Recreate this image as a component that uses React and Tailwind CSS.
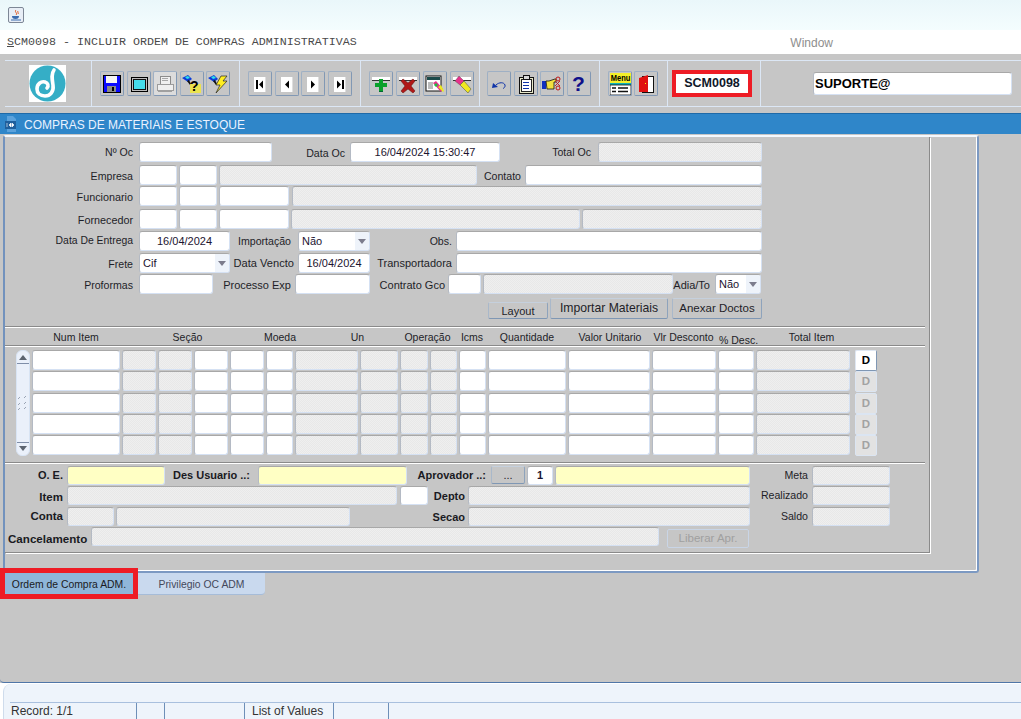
import React from "react";

const fieldBase = "h-full shrink-0 rounded-[3px] border border-t-[#a8a8a8] border-l-[#b4bac4] border-r-[#d5e1f3] border-b-[#d5e1f3]";
const dither = "bg-[repeating-conic-gradient(#e8e8e8_0%_25%,#efefef_0%_50%)] bg-[length:2px_2px]";

function F({ w, kind = "white", children, className = "" }) {
  const bg = kind === "white" ? "bg-white" : kind === "yellow" ? "bg-[#ffffc4]" : dither;
  return (
    <div className={`${fieldBase} ${bg} ${w} ${className} flex items-center overflow-hidden text-[11px] text-[#1c1430]`}>
      {children}
    </div>
  );
}

function L({ w, children, className = "" }) {
  return <div className={`${w} shrink-0 text-right text-[10.600px] leading-[22px] whitespace-nowrap text-[#1e1e28] ${className}`}>{children}</div>;
}

function B({ w, children, className = "" }) {
  return <div className={`${w} shrink-0 text-right text-[11px] font-bold leading-[19px] whitespace-nowrap text-[#1a1a22] ${className}`}>{children}</div>;
}

function Sel({ w, children }) {
  return (
    <div className={`${fieldBase} bg-white ${w} relative flex items-center text-[11px] text-[#1c1430] overflow-hidden`}>
      <span className="pl-[3px]">{children}</span>
      <div className="absolute right-0 top-0 bottom-0 w-[14px] bg-[#eef3fa] flex items-center justify-center">
        <svg width="8" height="5" viewBox="0 0 8 5"><path d="M0 0h8L4 5z" fill="#7c7c8c" /></svg>
      </div>
    </div>
  );
}

function Btn({ w, h = "h-full", className = "", children, off }) {
  return (
    <div className={`${w} ${h} shrink-0 rounded-[2px] border border-t-[#c5d0dd] border-l-[#a9b8ca] border-r-[#8ea3bc] border-b-[#7f97b4] bg-[#c6c6c6] flex items-center justify-center whitespace-nowrap ${off ? "text-[#9d9d9d]" : "text-[#1e1e28]"} ${className}`}>
      {children}
    </div>
  );
}

function Tb({ children, ml = "", light }) {
  return (
    <div className={`w-[24px] h-[25px] shrink-0 rounded-[2px] border border-[#9fb0c4] border-r-[#8198b4] border-b-[#8198b4] flex items-center justify-center ${light ? "bg-[#dcdcdc]" : "bg-[#c6c6c6]"} ${ml}`}>
      {children}
    </div>
  );
}

const Ico = ({ children }) => <svg width="20" height="20" viewBox="0 0 20 20" shapeRendering="crispEdges">{children}</svg>;
const IcoS = ({ children }) => <svg width="20" height="20" viewBox="0 0 20 20">{children}</svg>;

const Save = () => (
  <Ico>
    <rect x="1" y="1" width="17" height="17" fill="#0a0aff" stroke="#000" />
    <rect x="4" y="2" width="11" height="7" fill="#f4f4f4" />
    <rect x="5" y="12" width="9" height="6" fill="#8a8a8a" />
    <rect x="10" y="13" width="2" height="4" fill="#000" />
  </Ico>
);
const Screen = () => (
  <Ico>
    <rect x="2" y="3" width="16" height="14" fill="#bdbdbd" stroke="#000" />
    <rect x="4" y="5" width="12" height="10" fill="#46dcea" stroke="#111" />
  </Ico>
);
const Printer = () => (
  <Ico>
    <rect x="5" y="2" width="10" height="8" fill="#f0f0f0" stroke="#8c8c8c" />
    <rect x="7" y="4" width="6" height="1" fill="#a8a8a8" />
    <rect x="7" y="6" width="6" height="1" fill="#a8a8a8" />
    <rect x="2" y="10" width="16" height="6" fill="#efefef" stroke="#9c9c9c" />
    <rect x="3" y="16" width="14" height="2" fill="#a0a0a0" />
  </Ico>
);
const Funnel = () => (
  <g>
    <path d="M0 4l6-3 4 4-4 3z" fill="#0a3cd8" />
    <path d="M3 3l3-1 2 2-3 1z" fill="#2ee0e8" />
    <path d="M5 7l3 4 1-1-2-4z" fill="#111" />
  </g>
);
const Query = () => (
  <IcoS>
    <Funnel />
    <rect x="8" y="10" width="11" height="9" fill="#f3ea30" opacity="0.8" />
    <text x="8" y="17" fontSize="14" fontWeight="bold" fontFamily="Liberation Sans" fill="#000">?</text>
  </IcoS>
);
const Bolt = () => (
  <IcoS>
    <Funnel />
    <path d="M13 2h6l-4 5h4L8 19l4-8H8z" fill="#ffee22" stroke="#222" strokeWidth="0.7" />
  </IcoS>
);
const Nav = ({ d, bar }) => (
  <Ico>
    <rect x="4" y="3" width="12" height="15" fill="#fff" />
    <rect x="15" y="3" width="1" height="15" fill="#dedede" />
    {bar === "l" && <rect x="6" y="6" width="2" height="9" fill="#000" />}
    {bar === "r" && <rect x="12" y="6" width="2" height="9" fill="#000" />}
    <path d={d} fill="#000" shapeRendering="auto" />
  </Ico>
);
const Bar = () => (
  <>
    <rect x="1" y="3" width="18" height="3" fill="#fff" />
    <rect x="1" y="6" width="18" height="1" fill="#333" />
  </>
);
const Plus = () => (
  <Ico>
    <Bar />
    <rect x="8" y="5" width="4" height="13" fill="#0aa02a" />
    <rect x="4" y="9" width="12" height="4" fill="#0aa02a" />
    <rect x="8" y="17" width="4" height="1" fill="#063" />
  </Ico>
);
const Cross = () => (
  <IcoS>
    <Bar />
    <path d="M3 7l2-2 5 4 5-4 2 2-4 5 4 5-2 2-5-4-5 4-2-2 4-5z" fill="#b01818" stroke="#5c0c0c" strokeWidth="0.5" />
  </IcoS>
);
const WinPen = () => (
  <IcoS>
    <rect x="1" y="2" width="15" height="15" fill="#fff" stroke="#111" />
    <rect x="2" y="3" width="13" height="3" fill="#1c4a4a" />
    <path d="M3 8h5v7H3z" fill="#bbb" />
    <path d="M8 9l3-2 7 8-2 3z" fill="#e8308c" />
    <path d="M13 13l3-2 3 6-1 1z" fill="#eaea20" />
    <path d="M9 11l2-2 2 2-2 2z" fill="#20c040" />
  </IcoS>
);
const Pencil = () => (
  <IcoS>
    <Bar />
    <path d="M3 7l4-5 5 5-4 4z" fill="#e8308c" stroke="#444" strokeWidth="0.4" />
    <path d="M8 11l4-4 7 8-3 4z" fill="#f0e820" stroke="#444" strokeWidth="0.5" />
  </IcoS>
);
const Undo = () => (
  <IcoS>
    <path d="M7 11c3-3 8-3 9 0 .5 2-1 3-2 3.500" fill="none" stroke="#1034a8" strokeWidth="1" />
    <path d="M3 14l1-5 5 4z" fill="#1034a8" />
  </IcoS>
);
const Clip = () => (
  <Ico>
    <rect x="3" y="3" width="14" height="16" fill="#e8e8c8" stroke="#111" />
    <rect x="5" y="5" width="10" height="12" fill="#fff" stroke="#222" />
    <rect x="7" y="1" width="6" height="4" fill="#d8d8d8" stroke="#111" />
    <rect x="7" y="8" width="6" height="1" fill="#1034a8" />
    <rect x="7" y="11" width="6" height="1" fill="#1034a8" />
    <rect x="7" y="14" width="6" height="1" fill="#1034a8" />
  </Ico>
);
const Hand = () => (
  <IcoS>
    <rect x="0" y="7" width="4" height="8" fill="#1030c0" />
    <path d="M4 7h3l6-2h1v3h-2v7H5z" fill="#f2e040" stroke="#111" strokeWidth="0.8" />
    <circle cx="16" cy="5" r="2" fill="none" stroke="#c01818" strokeWidth="1" />
    <circle cx="16" cy="14" r="2" fill="none" stroke="#c01818" strokeWidth="1" />
    <path d="M13 7l5 5M13 12l5-5" stroke="#c01818" strokeWidth="0.9" />
  </IcoS>
);
const Help = () => (
  <span className="text-[21px] font-bold leading-none text-[#10108a] [font-family:'Liberation_Sans',sans-serif]">?</span>
);
const MenuIco = () => (
  <svg width="21" height="22" viewBox="0 0 21 22">
    <rect x="0" y="0" width="21" height="10" fill="#f4f02a" />
    <text transform="scale(1 1.25)" x="0.800" y="6.300" fontSize="7.500" fontWeight="bold" fontFamily="Liberation Sans" fill="#000">Menu</text>
    <rect x="0" y="10" width="21" height="2" fill="#10b0b8" />
    <rect x="0" y="12" width="21" height="10" fill="#fff" stroke="#111" strokeWidth="0.8" />
    <path d="M2 15h4M8 15h10M2 18.500h4M8 18.500h10" stroke="#111" strokeWidth="1.400" />
  </svg>
);
const Door = () => (
  <Ico>
    <rect x="6" y="2" width="11" height="16" fill="#fff" stroke="#111" />
    <path d="M3 4l9-3v17l-9 0z" fill="#e01010" shapeRendering="auto" />
    <rect x="9" y="9" width="1" height="1" fill="#ff0" />
  </Ico>
);
const Logo = () => (
  <div className="w-[37px] h-[37px] bg-white shrink-0">
    <svg width="37" height="37" viewBox="0 0 37 37">
      <circle cx="18.500" cy="18.500" r="18" fill="#35aec6" />
      <path d="M25 5c-3 4-2 9-1 15 1 7-3 11-8 11-5 0-8-3-8-7 0-5 4-8 8-7 3 1 4 4 2 6" fill="none" stroke="#fff" strokeWidth="3.600" strokeLinecap="round" />
    </svg>
  </div>
);

const Sep = () => <div className="w-[1px] h-full bg-[#dce7f5] shrink-0" />;

const cols = [
  ["w-[88px]", "white"], ["w-[34px]", "gray"], ["w-[34px]", "gray"], ["w-[34px]", "white"], ["w-[34px]", "white"], ["w-[27px]", "white"],
  ["w-[63px]", "gray"], ["w-[38px]", "gray"], ["w-[28px]", "gray"], ["w-[27px]", "gray"], ["w-[27px]", "white"], ["w-[78px]", "white"],
  ["w-[82px]", "white"], ["w-[64px]", "white"], ["w-[36px]", "white"], ["w-[94px]", "gray"],
];

function TableRow({ mt, first }) {
  return (
    <div className={`flex gap-[2px] h-[20px] ${mt}`}>
      {cols.map(([w, k], i) => <F key={i} w={w} kind={k} />)}
      {first ? (
        <div className="ml-[3px] w-[22px] h-[21px] shrink-0 rounded-[2px] bg-white border border-[#dfe7f2] border-r-[#7f97b4] border-b-[#7f97b4] flex items-center justify-center text-[11.500px] font-bold text-black">D</div>
      ) : (
        <div className="ml-[3px] w-[22px] h-[21px] shrink-0 rounded-[2px] bg-[#e2e2e2] border border-[#dbe5f2] flex items-center justify-center text-[11.500px] font-bold text-[#a2a2a2]">D</div>
      )}
    </div>
  );
}

const Line = ({ className = "" }) => <div className={`w-[920px] h-[2px] border-t border-t-[#8a8a8a] bg-white shrink-0 ${className}`} />;

export default function App() {
  return (
    <div className="w-[1021px] h-[719px] overflow-hidden flex flex-col bg-[#c6c6c6] [font-family:'Liberation_Sans',Arial,sans-serif]">
      {/* Window title */}
      <div className="h-[30px] shrink-0 bg-gradient-to-b from-[#eaf7fa] to-[#f4fdfe] flex items-center pl-[8px]">
        <div className="w-[16px] h-[16px] rounded-[2px] border border-[#7d8796] bg-[#e8eef6] flex items-center justify-center">
          <svg width="12" height="12" viewBox="0 0 12 12">
            <path d="M6 1c-2 2 2 3 0 5M8 2c-1 1 1 2 0 3" fill="none" stroke="#e0561c" strokeWidth="1" />
            <path d="M2 7h7c0 2-1 3-3.500 3S2 9 2 7z" fill="#3c6cae" />
            <path d="M1 11h10" stroke="#3c6cae" strokeWidth="1" />
          </svg>
        </div>
      </div>
      {/* Menu/title line */}
      <div className="h-[24px] shrink-0 bg-white flex items-center justify-between pl-[7px] pr-[188px] pt-[2px]">
        <span className="text-[11.670px] text-[#4a4a4a] whitespace-pre [font-family:'Liberation_Mono',monospace]"><span className="underline">S</span>CM0098 - INCLUIR ORDEM DE COMPRAS ADMINISTRATIVAS</span>
        <span className="text-[12px] text-[#8e8e8e]">Window</span>
      </div>

      {/* Toolbar */}
      <div className="h-[47px] mt-[6px] ml-[5px] shrink-0 border-y border-y-[#dce7f5] flex">
        <div className="w-[86px] h-full flex items-center pl-[24px]"><Logo /></div>
        <Sep />
        <div className="w-[147px] h-full flex items-center pl-[8px] gap-[2.500px]">
          <Tb><Save /></Tb><Tb><Screen /></Tb><Tb light><Printer /></Tb><Tb><Query /></Tb><Tb><Bolt /></Tb>
        </div>
        <Sep />
        <div className="w-[120px] h-full flex items-center pl-[8px] gap-[2.500px]">
          <Tb><Nav bar="l" d="M9 10.500l4-4v8z" /></Tb>
          <Tb><Nav d="M8 10.500l4-4v8z" /></Tb>
          <Tb><Nav d="M12 10.500L8 6.500v8z" /></Tb>
          <Tb><Nav bar="r" d="M11 10.500L7 6.500v8z" /></Tb>
        </div>
        <Sep />
        <div className="w-[118px] h-full flex items-center pl-[8px] gap-[3px]">
          <Tb><Plus /></Tb><Tb><Cross /></Tb><Tb><WinPen /></Tb><Tb><Pencil /></Tb>
        </div>
        <Sep />
        <div className="w-[119px] h-full flex items-center pl-[7px] gap-[2.500px]">
          <Tb><Undo /></Tb><Tb><Clip /></Tb><Tb><Hand /></Tb><Tb><Help /></Tb>
        </div>
        <Sep />
        <div className="w-[67px] h-full flex items-center pl-[8px] gap-[2px]">
          <Tb><MenuIco /></Tb><Tb><Door /></Tb>
        </div>
        <Sep />
        <div className="w-[92px] h-full flex items-center pl-[4px]">
          <div className="w-[80px] h-[27px] -mt-[1px] border-[4px] border-[#ee1c25] bg-white flex items-center justify-center text-[12.500px] font-bold text-[#10182a]">SCM0098</div>
        </div>
        <Sep />
        <div className="flex-1 h-full flex items-center pl-[52px]">
          <div className={`${fieldBase} !h-[23px] bg-white w-[199px] flex items-center pl-[1px] text-[13px] font-bold text-black`}>SUPORTE@</div>
        </div>
      </div>

      {/* Blue header */}
      <div className="h-[21px] mt-[6px] shrink-0 bg-[#2f86c9] border-t border-t-[#1f6aa8] flex items-center pl-[5px]">
        <svg width="13" height="16" viewBox="0 0 13 16" className="shrink-0">
          <path d="M2 0h6l3 3v13H2z" fill="#5ba2dc" />
          <rect x="0" y="5" width="11" height="8" fill="#1f5f9c" />
          <path d="M2 7v4M4 9l2-2v4zM9 9L7 7v4z" fill="#fff" stroke="#fff" strokeWidth="0.600" />
        </svg>
        <span className="ml-[6px] pt-[1px] text-[12px] text-[#eaf2ff] whitespace-nowrap">COMPRAS DE MATERIAIS E ESTOQUE</span>
      </div>

      {/* Main */}
      <div className="flex-1 flex flex-col relative rounded-bl-[4px] border-b border-b-[#4f76a8]">
        <div className="relative ml-[3px] mt-[1px] w-[976px] h-[438px] shrink-0 rounded-[3px] border-t-2 border-t-[#f4f8fd] border-l-2 border-l-[#7292bd] border-r-2 border-r-[#7c99c2] border-b-2 border-b-[#7c99c2] shadow-[inset_-1px_-1px_0_#fff]">
          <div className="w-[925px] h-[416px] border-r border-b border-r-[#8a8a8a] border-b-[#8a8a8a] shadow-[1px_1px_0_#fff] flex flex-col">
            {/* Upper form */}
            <div className="flex h-[20px] mt-[5px]">
              <L w="w-[128px]" className="!leading-[20px]">Nº Oc</L>
              <F w="w-[133px] ml-[6px]" />
              <L w="w-[73px]">Data Oc</L>
              <F w="w-[150px] ml-[5px] justify-center">16/04/2024 15:30:47</F>
              <L w="w-[91px]" className="!leading-[20px]">Total Oc</L>
              <F w="w-[164px] ml-[7px]" kind="gray" />
            </div>
            <div className="flex h-[20px] mt-[3px]">
              <L w="w-[128px]">Empresa</L>
              <F w="w-[38px] ml-[6px]" /><F w="w-[38px] ml-[2px]" /><F w="w-[258px] ml-[2px]" kind="gray" />
              <L w="w-[44px]">Contato</L>
              <F w="w-[237px] ml-[4px]" />
            </div>
            <div className="flex h-[20px] mt-[1px]">
              <L w="w-[128px]" className="!text-[10.800px]">Funcionario</L>
              <F w="w-[38px] ml-[6px]" /><F w="w-[38px] ml-[2px]" /><F w="w-[70px] ml-[2px]" /><F w="w-[470px] ml-[3px]" kind="gray" />
            </div>
            <div className="flex h-[20px] mt-[3px]">
              <L w="w-[128px]" className="!text-[10.800px]">Fornecedor</L>
              <F w="w-[38px] ml-[6px]" /><F w="w-[38px] ml-[2px]" /><F w="w-[70px] ml-[2px]" /><F w="w-[289px] ml-[2px]" kind="gray" /><F w="w-[180px] ml-[2px]" kind="gray" />
            </div>
            <div className="flex h-[20px] mt-[2px]">
              <L w="w-[128px]" className="!leading-[20px] !text-[10.400px]">Data De Entrega</L>
              <F w="w-[91px] ml-[6px] justify-center">16/04/2024</F>
              <L w="w-[61px]" className="!leading-[20px]">Importação</L>
              <div className="ml-[7px]"><Sel w="w-[72px]">Não</Sel></div>
              <L w="w-[82px]" className="!leading-[20px]">Obs.</L>
              <F w="w-[306px] ml-[4px]" />
            </div>
            <div className="flex h-[20px] mt-[2px]">
              <L w="w-[128px]">Frete</L>
              <div className="ml-[6px]"><Sel w="w-[91px]">Cif</Sel></div>
              <L w="w-[64px]" className="!leading-[20px] !text-[11.100px]">Data Vencto</L>
              <F w="w-[72px] ml-[4px] justify-center">16/04/2024</F>
              <L w="w-[82px]" className="!leading-[20px] !text-[11px]">Transportadora</L>
              <F w="w-[306px] ml-[4px]" />
            </div>
            <div className="flex h-[20px] mt-[1px]">
              <L w="w-[128px]">Proformas</L>
              <F w="w-[74px] ml-[6px]" />
              <L w="w-[78px]" className="!text-[11px]">Processo Exp</L>
              <F w="w-[75px] ml-[4px]" />
              <L w="w-[75px]" className="!text-[11px]">Contrato Gco</L>
              <F w="w-[33px] ml-[3px]" /><F w="w-[190px] ml-[2px]" kind="gray" />
              <L w="w-[37px]" className="!text-[11px]">Adia/To</L>
              <div className="ml-[5px]"><Sel w="w-[46px]">Não</Sel></div>
            </div>
            <div className="flex items-end h-[21px] mt-[4px] pl-[483px]">
              <Btn w="w-[60px]" h="h-[17px]" className="text-[11px] pt-[2px]">Layout</Btn>
              <Btn w="w-[118px]" className="ml-[2px] text-[12.200px]">Importar Materiais</Btn>
              <Btn w="w-[90px]" className="ml-[4px] text-[11.500px]">Anexar Doctos</Btn>
            </div>

            <Line className="mt-[7px]" />

            {/* Table header */}
            <div className="flex h-[17px] pl-[27px] text-[10.500px] leading-[18px] text-[#1e1e28] text-center whitespace-nowrap">
              <div className="w-[88px]">Num Item</div>
              <div className="w-[75px] ml-[30px]">Seção</div>
              <div className="w-[60px] ml-[25px]">Moeda</div>
              <div className="w-[55px] ml-[20px]">Un</div>
              <div className="w-[55px] ml-[15px]">Operação</div>
              <div className="w-[30px] ml-[2px]">Icms</div>
              <div className="w-[74px] ml-[3px]">Quantidade</div>
              <div className="w-[80px] ml-[6px]">Valor Unitario</div>
              <div className="w-[67px]">Vlr Desconto</div>
              <div className="w-[43px] mt-[3px]">% Desc.</div>
              <div className="w-[83px] ml-[10px]">Total Item</div>
            </div>
            <Line />

            {/* Table body */}
            <div className="flex mt-[3px] pl-[11px]">
              <div className="w-[14px] h-[106px] shrink-0 rounded-[6px] bg-[#eaf0fa] border border-[#d8e4f4] flex flex-col items-center justify-between py-[4px]">
                <div className="w-full flex flex-col items-center gap-[3px]">
                  <svg width="8" height="5" viewBox="0 0 8 5"><path d="M4 0l4 5H0z" fill="#5c6470" /></svg>
                  <div className="w-full h-[1px] bg-[#7f8ea8]" />
                </div>
                <svg width="10" height="16" viewBox="0 0 10 16">
                  <path d="M0 4l2-2M6 3l2-2M0 10l2-2M6 9l2-2M0 15l2-2M6 14l2-2" stroke="#9aa4b4" strokeWidth="1" />
                </svg>
                <div className="w-full flex flex-col items-center gap-[3px]">
                  <div className="w-full h-[1px] bg-[#7f8ea8]" />
                  <svg width="8" height="5" viewBox="0 0 8 5"><path d="M0 0h8L4 5z" fill="#5c6470" /></svg>
                </div>
              </div>
              <div className="ml-[2px] flex flex-col">
                <TableRow first />
                <TableRow mt="mt-[1px]" />
                <TableRow mt="mt-[2px]" />
                <TableRow mt="mt-[1px]" />
                <TableRow mt="mt-[1px]" />
              </div>
            </div>

            <Line className="mt-[6px]" />

            {/* Lower form */}
            <div className="flex h-[19px] mt-[2px]">
              <B w="w-[58px]">O. E.</B>
              <F w="w-[98px] ml-[4px]" kind="yellow" />
              <B w="w-[85px]">Des Usuario ..:</B>
              <F w="w-[149px] ml-[8px]" kind="yellow" />
              <B w="w-[79px]">Aprovador ..:</B>
              <Btn w="w-[34px] ml-[5px]" h="h-[18px]" className="text-[11px]">...</Btn>
              <F w="w-[26px] ml-[2px] justify-center font-bold">1</F>
              <F w="w-[195px] ml-[2px]" kind="yellow" />
              <L w="w-[58px]" className="!leading-[19px]">Meta</L>
              <F w="w-[78px] ml-[4px]" kind="gray" />
            </div>
            <div className="flex h-[19px] mt-[1px]">
              <B w="w-[58px]" className="mt-[2px] !text-[11.500px]">Item</B>
              <F w="w-[330px] ml-[4px]" kind="gray" />
              <F w="w-[28px] ml-[3px]" />
              <B w="w-[37px]" className="mt-[1px]">Depto</B>
              <F w="w-[282px] ml-[3px]" kind="gray" />
              <L w="w-[58px]" className="!leading-[19px]">Realizado</L>
              <F w="w-[78px] ml-[4px]" kind="gray" />
            </div>
            <div className="flex h-[19px] mt-[2px]">
              <B w="w-[58px]" className="!text-[11.500px]">Conta</B>
              <F w="w-[47px] ml-[4px]" kind="gray" />
              <F w="w-[234px] ml-[2px]" kind="gray" />
              <B w="w-[115px]" className="mt-[1px]">Secao</B>
              <F w="w-[282px] ml-[3px]" kind="gray" />
              <L w="w-[58px]" className="!leading-[19px]">Saldo</L>
              <F w="w-[78px] ml-[4px]" kind="gray" />
            </div>
            <div className="flex h-[19px] mt-[1px] pl-[3px]">
              <B w="w-[79px]" className="!text-left !text-[11.600px] mt-[2px]">Cancelamento</B>
              <F w="w-[568px] ml-[4px]" kind="gray" />
              <Btn w="w-[82px] ml-[8px] mt-[2px]" off className="text-[11.500px] !border-[#c9d5e6] text-[#a0a0a0]">Liberar Apr.</Btn>
            </div>
          </div>
        </div>

        {/* Tabs */}
        <div className="relative flex pl-[5px] shrink-0">
          <div className="w-[128px] h-[22px] pt-[2px] bg-[#8fb6da] border-b border-b-[#5f86ad] flex items-center justify-center text-[10.400px] text-[#1a1a22] whitespace-nowrap">Ordem de Compra ADM.</div>
          <div className="w-[127px] h-[22px] pt-[2px] ml-[5px] bg-[#c9d9ee] rounded-br-[4px] border-b border-b-[#a6bcd8] flex items-center justify-center text-[10.400px] text-[#44485c] whitespace-nowrap">Privilegio OC ADM</div>
          <div className="absolute left-0 -top-[5px] w-[138px] h-[31px] border-[5px] border-[#ee1c25] pointer-events-none" />
        </div>
      </div>

      {/* Status bar */}
      <div className="h-[36px] shrink-0 bg-white pl-[3px] pt-[1px]">
        <div className="h-full rounded-tl-[8px] bg-[#eef4fb] border-l border-l-[#cfdcec] pl-[6px] flex flex-col justify-end">
          <div className="h-[17px] border-t border-t-[#a9c0de] flex items-center text-[12px] text-[#333] whitespace-nowrap">
            <div className="w-[127px] h-full pl-[1px] border-r border-r-[#6e8fb8] leading-[17px]">Record: 1/1</div>
            <div className="w-[28px] h-full border-r border-r-[#6e8fb8]" />
            <div className="w-[80px] h-full border-r border-r-[#6e8fb8]" />
            <div className="w-[89px] h-full pl-[7px] border-r border-r-[#6e8fb8] leading-[17px]">List of Values</div>
            <div className="w-[55px] h-full border-r border-r-[#6e8fb8]" />
          </div>
        </div>
      </div>
    </div>
  );
}
